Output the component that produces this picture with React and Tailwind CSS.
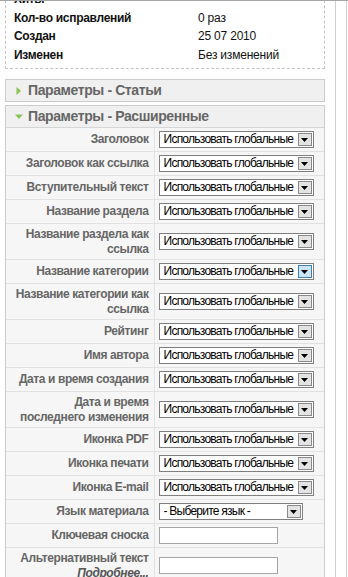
const FONT = { fontFamily: '"Liberation Sans", Arial, sans-serif' }

const infoRows = [
  ['Хиты', ''],
  ['Кол-во исправлений', '0 раз'],
  ['Создан', '25 07 2010'],
  ['Изменен', 'Без изменений'],
]

const GLOBAL = 'Использовать глобальные'

const params = [
  { label: ['Заголовок'], type: 'select' },
  { label: ['Заголовок как ссылка'], type: 'select' },
  { label: ['Вступительный текст'], type: 'select' },
  { label: ['Название раздела'], type: 'select' },
  { label: ['Название раздела как', 'ссылка'], type: 'select' },
  { label: ['Название категории'], type: 'select', hover: true },
  { label: ['Название категории как', 'ссылка'], type: 'select' },
  { label: ['Рейтинг'], type: 'select' },
  { label: ['Имя автора'], type: 'select' },
  { label: ['Дата и время создания'], type: 'select' },
  { label: ['Дата и время', 'последнего изменения'], type: 'select' },
  { label: ['Иконка PDF'], type: 'select' },
  { label: ['Иконка печати'], type: 'select' },
  { label: ['Иконка E-mail'], type: 'select' },
  { label: ['Язык материала'], type: 'lang' },
  { label: ['Ключевая сноска'], type: 'input' },
  { label: ['Альтернативный текст'], sub: 'Подробнее...', type: 'input' },
]

function Triangle({ open }) {
  return (
    <svg width="8" height="8" viewBox="0 0 8 8" className="shrink-0">
      {open ? (
        <path d="M0 1.5 L8 1.5 L4 6 Z" fill="#8cc152" />
      ) : (
        <path d="M1.5 0 L6 4 L1.5 8 Z" fill="#8cc152" />
      )}
    </svg>
  )
}

function FakeSelect({ text, wide, hover }) {
  return (
    <div
      className={`flex h-[17px] items-center border border-[#7f7f7f] bg-white pl-[4px] pr-px ${
        wide ? 'w-[155px]' : 'w-[144px]'
      }`}
    >
      <span className="flex-1 overflow-hidden whitespace-nowrap text-[12px] leading-[15px] tracking-[-0.75px] text-black">
        {text}
      </span>
      <span
        className={`flex h-[13px] w-[14px] shrink-0 items-center justify-center border ${
          hover ? 'border-[#3c7fb1] bg-[#cde6f7]' : 'border-[#8a8a8a] bg-[#e3e3e3]'
        }`}
      >
        <svg width="7" height="4" viewBox="0 0 7 4">
          <path d="M0 0 L7 0 L3.5 4 Z" fill="#000" />
        </svg>
      </span>
    </div>
  )
}

function ParamRow({ row }) {
  return (
    <tr>
      <td className="w-[148px] border-r border-b border-[#e2e2e2] py-[3px] pr-[5px] pl-[2px] text-right align-middle text-[12px] leading-[14.5px] font-bold tracking-[-0.4px] text-[#666]">
        {row.label.map((line) => (
          <div key={line}>{line}</div>
        ))}
        {row.sub ? <div className="italic text-[#555]">{row.sub}</div> : null}
      </td>
      <td className="border-b border-[#e2e2e2] py-[3px] pl-[4px] align-middle">
        {row.type === 'select' ? <FakeSelect text={GLOBAL} wide hover={row.hover} /> : null}
        {row.type === 'lang' ? <FakeSelect text="- Выберите язык -" /> : null}
        {row.type === 'input' ? (
          <div className="h-[17px] w-[119px] border border-[#a5a5a5] bg-white" />
        ) : null}
      </td>
    </tr>
  )
}

export default function App() {
  return (
    <div
      className="flex h-[577px] w-[348px] overflow-hidden border-t border-[#a6a6a6] bg-white"
      style={FONT}
    >
      <div className="w-[336px] shrink-0 border-r border-[#cfcfcf] pr-[10px] pl-[5px]">
        <div className="-mt-[16px] w-[320px] border border-dashed border-[#c4c4c4] px-[8px] pt-[4px] pb-[4px]">
          <table className="w-full">
            <tbody>
              {infoRows.map(([k, v]) => (
                <tr key={k} className="h-[18.5px]">
                  <td className="w-[184px] text-[12px] font-bold tracking-[-0.3px] text-[#111]">{k}</td>
                  <td className="text-[12px] tracking-[-0.2px] text-[#111]">{v}</td>
                </tr>
              ))}
            </tbody>
          </table>
        </div>

        <div className="mt-[10px] w-[320px] border border-[#cccccc] bg-[#f0f0f0]">
          <div className="flex h-[21px] items-center gap-[5px] pl-[9px] text-[14px] font-bold tracking-[-0.4px] text-[#666]">
            <Triangle />
            <span>Параметры - Статьи</span>
          </div>
        </div>

        <div className="mt-[3px] w-[320px] border border-[#cccccc] bg-[#f6f6f6]">
          <div className="flex h-[22px] items-center gap-[5px] border-b border-[#d6d6d6] bg-[#f0f0f0] pl-[9px] text-[14px] font-bold tracking-[-0.4px] text-[#666]">
            <Triangle open />
            <span>Параметры - Расширенные</span>
          </div>
          <table className="w-full">
            <tbody>
              {params.map((row) => (
                <ParamRow key={row.label.join(' ')} row={row} />
              ))}
            </tbody>
          </table>
        </div>
      </div>
      <div className="w-[11px] shrink-0 border-r border-[#cfcfcf]" />
    </div>
  )
}
